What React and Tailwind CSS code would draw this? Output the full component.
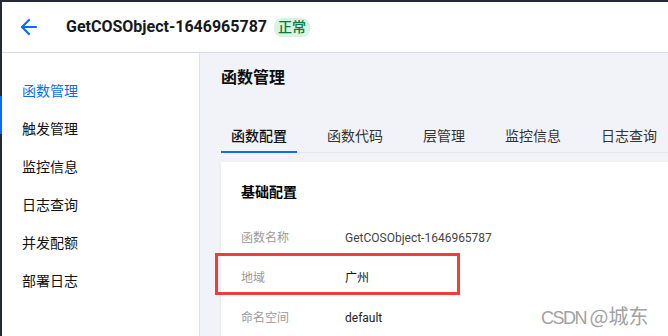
import { ArrowLeft } from 'lucide-react';

const menu = ['函数管理', '触发管理', '监控信息', '日志查询', '并发配额', '部署日志'];
const tabs = ['函数配置', '函数代码', '层管理', '监控信息', '日志查询'];
const rows = [
    { label: '函数名称', value: 'GetCOSObject-1646965787', tone: 'text-[#444]' },
    { label: '地域', value: '广州', tone: 'text-[#111]' },
    { label: '命名空间', value: 'default', tone: 'text-[#222]' },
];

const App = () => {
    return (
        <div
            className="relative w-[668px] h-[336px] overflow-hidden flex flex-col bg-white"
            style={{ fontFamily: 'Roboto, "Noto Sans CJK SC", sans-serif' }}
        >
            {/* top dark edge */}
            <div className="h-[2px] bg-[#252b36] shrink-0" />

            <div className="flex flex-1 min-h-0">
                {/* left dark edge with active marker */}
                <div className="w-[2px] bg-[#252b36] shrink-0">
                    <div className="mt-[94px] h-[38px] bg-[#0a6cf5]" />
                </div>

                <div className="flex-1 flex flex-col min-w-0">
                    {/* header */}
                    <div className="h-[51px] shrink-0 border-b border-[#d6dce6] flex items-center pl-[15px]">
                        <ArrowLeft size={24} strokeWidth={2.2} className="text-[#0a6cf5]" />
                        <span className="ml-[25px] text-[16px] font-bold text-[#16181c]">GetCOSObject-1646965787</span>
                        <span className="ml-[7px] px-[4px] h-[19px] flex items-center rounded-[8px] bg-[#d8f3e2] text-[#0b7a3e] text-[14px] font-medium leading-none">
                            正常
                        </span>
                    </div>

                    <div className="flex flex-1 min-h-0">
                        {/* sidebar */}
                        <div className="w-[198px] shrink-0 border-r border-[#dde2ea] pt-[19px]">
                            {menu.map((item, i) => (
                                <div
                                    key={item}
                                    className={`h-[38px] flex items-center pl-[20px] text-[14px] ${i === 0 ? 'text-[#0a6cf5]' : 'text-[#111]'}`}
                                >
                                    {item}
                                </div>
                            ))}
                        </div>

                        {/* content */}
                        <div className="flex-1 min-w-0 bg-[#f2f3f8] pl-[21px] pt-[13px] overflow-hidden">
                            <h1 className="text-[16px] leading-[24px] font-semibold text-[#0d0d0d]">函数管理</h1>

                            <div className="mt-[35px] flex gap-5 border-b border-[#e3e6ec] w-[700px]">
                                {tabs.map((tab, i) => (
                                    <div
                                        key={tab}
                                        className={`px-[10px] pb-[4px] text-[14px] leading-[22px] -mb-px border-b-2 ${i === 0 ? 'border-[#0a6cf5] text-[#111] font-medium' : 'border-transparent text-[#333]'}`}
                                    >
                                        {tab}
                                    </div>
                                ))}
                            </div>

                            <div className="mt-[9px] w-[600px] h-[200px] bg-white shadow-[0_1px_4px_rgba(0,0,0,0.06)] pl-[20px] pt-[19px]">
                                <h2 className="text-[14px] leading-[22px] font-bold text-[#000]">基础配置</h2>
                                <div className="mt-[15px]">
                                    {rows.map((row) => (
                                        <div key={row.label} className="h-[40px] flex items-center text-[12px]">
                                            <span className="w-[104px] text-[#9a9a9a]">{row.label}</span>
                                            <span className={row.tone}>{row.value}</span>
                                        </div>
                                    ))}
                                </div>
                            </div>
                        </div>
                    </div>
                </div>
            </div>

            {/* red annotation box */}
            <div className="absolute left-[215px] top-[253px] w-[245px] h-[42px] border-[3px] border-[#f23b3b]" />

            {/* watermark */}
            <div
                className="absolute left-[541px] top-[304px] text-[#a2a2a2] leading-[24px] whitespace-nowrap"
                style={{ textShadow: '0 0 2px #fff' }}
            >
                <span className="text-[18px] tracking-[-1.5px]" style={{ fontFamily: '"Liberation Sans", sans-serif' }}>CSDN </span>
                <span className="text-[20px]" style={{ fontFamily: '"Noto Sans CJK SC", sans-serif' }}>@城东</span>
            </div>
        </div>
    );
};

export default App;
